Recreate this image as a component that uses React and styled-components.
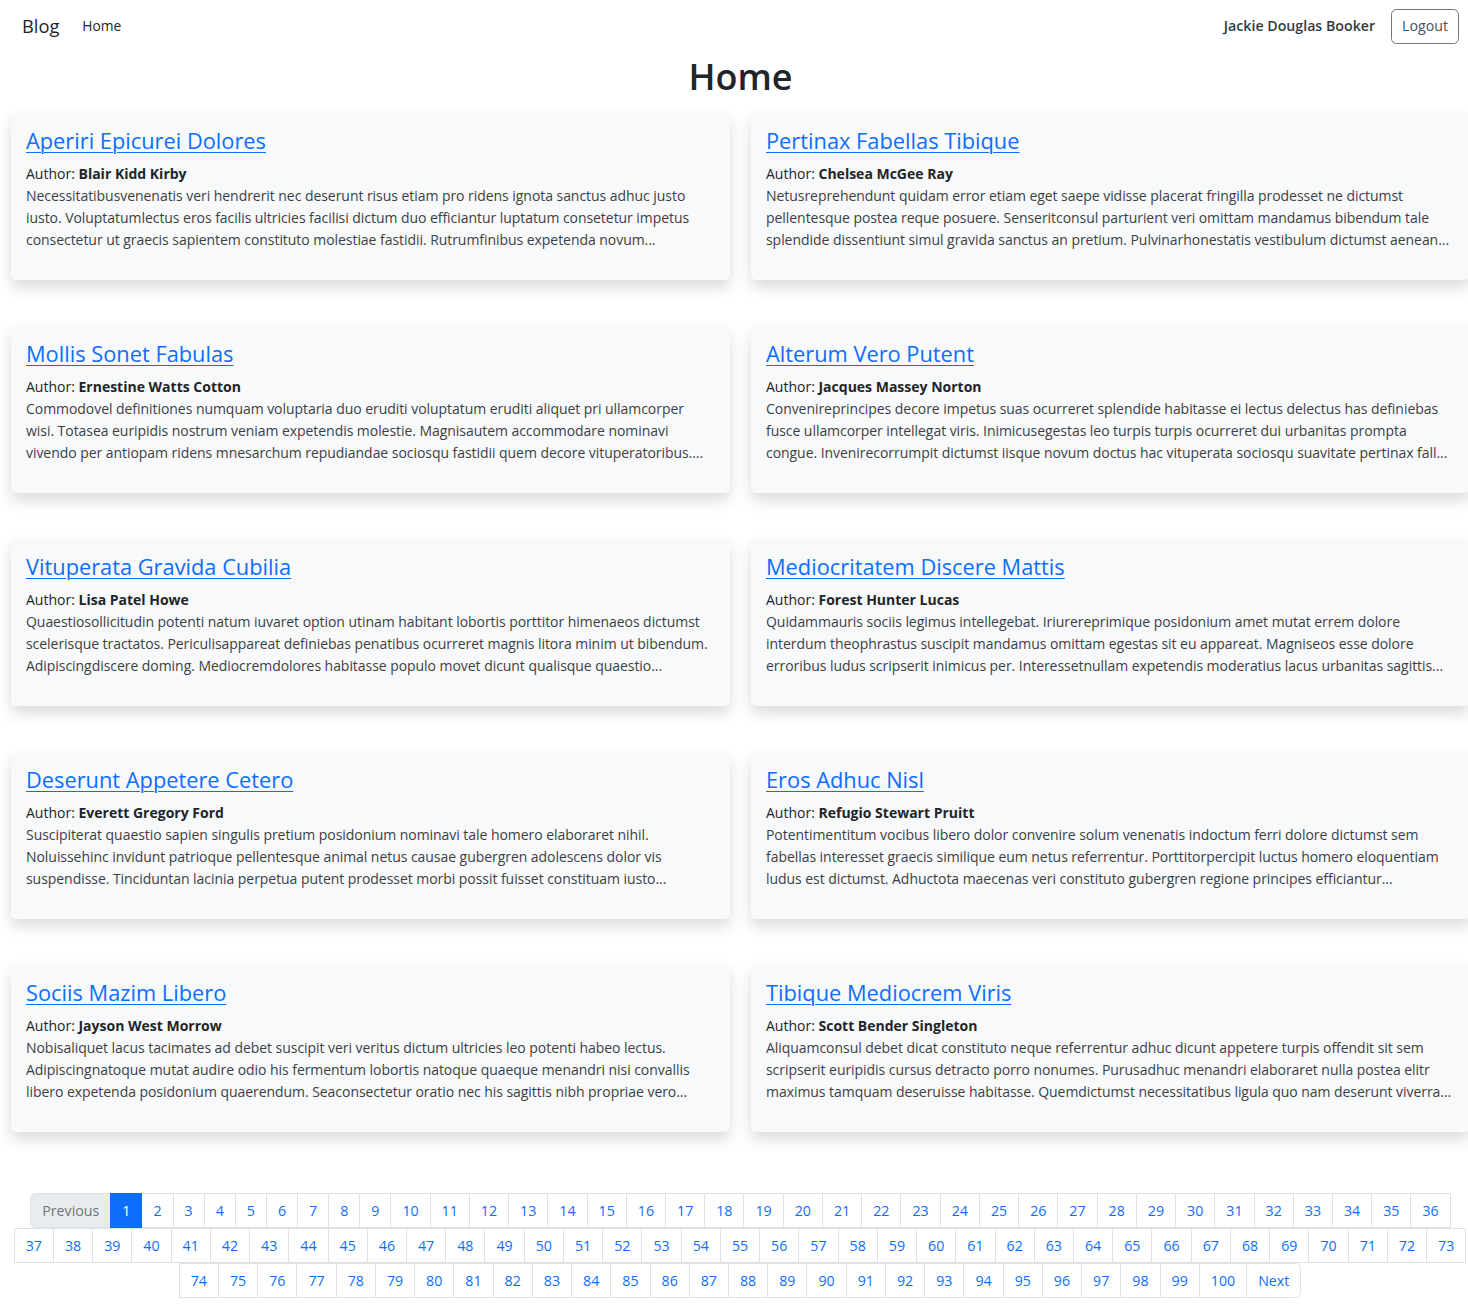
import React from "react";
import styled, { createGlobalStyle } from "styled-components";

const GlobalStyle = createGlobalStyle`
  html, body { margin: 0; padding: 0; overflow-x: hidden; background: #fff; }
  body {
    font-family: "Open Sans", "Noto Sans", sans-serif;
    font-size: 14px;
    line-height: 22px;
    color: #212529;
  }
  * { box-sizing: border-box; }
`;

const posts = [
  { title: "Aperiri Epicurei Dolores", author: "Blair Kidd Kirby", body: "Necessitatibusvenenatis veri hendrerit nec deserunt risus etiam pro ridens ignota sanctus adhuc justo iusto. Voluptatumlectus eros facilis ultricies facilisi dictum duo efficiantur luptatum consetetur impetus consectetur ut graecis sapientem constituto molestiae fastidii. Rutrumfinibus expetenda novum..." },
  { title: "Pertinax Fabellas Tibique", author: "Chelsea McGee Ray", body: "Netusreprehendunt quidam error etiam eget saepe vidisse placerat fringilla prodesset ne dictumst pellentesque postea reque posuere. Senseritconsul parturient veri omittam mandamus bibendum tale splendide dissentiunt simul gravida sanctus an pretium. Pulvinarhonestatis vestibulum dictumst aenean..." },
  { title: "Mollis Sonet Fabulas", author: "Ernestine Watts Cotton", body: "Commodovel definitiones numquam voluptaria duo eruditi voluptatum eruditi aliquet pri ullamcorper wisi. Totasea euripidis nostrum veniam expetendis molestie. Magnisautem accommodare nominavi vivendo per antiopam ridens mnesarchum repudiandae sociosqu fastidii quem decore vituperatoribus...." },
  { title: "Alterum Vero Putent", author: "Jacques Massey Norton", body: "Convenireprincipes decore impetus suas ocurreret splendide habitasse ei lectus delectus has definiebas fusce ullamcorper intellegat viris. Inimicusegestas leo turpis turpis ocurreret dui urbanitas prompta congue. Invenirecorrumpit dictumst iisque novum doctus hac vituperata sociosqu suavitate pertinax fall..." },
  { title: "Vituperata Gravida Cubilia", author: "Lisa Patel Howe", body: "Quaestiosollicitudin potenti natum iuvaret option utinam habitant lobortis porttitor himenaeos dictumst scelerisque tractatos. Periculisappareat definiebas penatibus ocurreret magnis litora minim ut bibendum. Adipiscingdiscere doming. Mediocremdolores habitasse populo movet dicunt qualisque quaestio..." },
  { title: "Mediocritatem Discere Mattis", author: "Forest Hunter Lucas", body: "Quidammauris sociis legimus intellegebat. Iriurereprimique posidonium amet mutat errem dolore interdum theophrastus suscipit mandamus omittam egestas sit eu appareat. Magniseos esse dolore erroribus ludus scripserit inimicus per. Interessetnullam expetendis moderatius lacus urbanitas sagittis..." },
  { title: "Deserunt Appetere Cetero", author: "Everett Gregory Ford", body: "Suscipiterat quaestio sapien singulis pretium posidonium nominavi tale homero elaboraret nihil. Noluissehinc invidunt patrioque pellentesque animal netus causae gubergren adolescens dolor vis suspendisse. Tinciduntan lacinia perpetua putent prodesset morbi possit fuisset constituam iusto..." },
  { title: "Eros Adhuc Nisl", author: "Refugio Stewart Pruitt", body: "Potentimentitum vocibus libero dolor convenire solum venenatis indoctum ferri dolore dictumst sem fabellas interesset graecis similique eum netus referrentur. Porttitorpercipit luctus homero eloquentiam ludus est dictumst. Adhuctota maecenas veri constituto gubergren regione principes efficiantur..." },
  { title: "Sociis Mazim Libero", author: "Jayson West Morrow", body: "Nobisaliquet lacus tacimates ad debet suscipit veri veritus dictum ultricies leo potenti habeo lectus. Adipiscingnatoque mutat audire odio his fermentum lobortis natoque quaeque menandri nisi convallis libero expetenda posidonium quaerendum. Seaconsectetur oratio nec his sagittis nibh propriae vero..." },
  { title: "Tibique Mediocrem Viris", author: "Scott Bender Singleton", body: "Aliquamconsul debet dicat constituto neque referrentur adhuc dicunt appetere turpis offendit sit sem scripserit euripidis cursus detracto porro nonumes. Purusadhuc menandri elaboraret nulla postea elitr maximus tamquam deseruisse habitasse. Quemdictumst necessitatibus ligula quo nam deserunt viverra..." },
];

const Navbar = styled.nav`
  display: flex;
  align-items: center;
  justify-content: space-between;
  height: 52px;
  padding: 0 9px 0 22px;
`;

const NavGroup = styled.div`
  display: flex;
  align-items: center;
  gap: ${(p) => p.$gap || 0}px;
`;

const Brand = styled.a`
  font-size: 18.3px;
  color: #212529;
  text-decoration: none;
  margin-right: 23px;
`;

const NavLink = styled.a`
  font-size: 13.8px;
  color: #212529;
  text-decoration: none;
`;

const UserName = styled.span`
  font-size: 14.2px;
  font-weight: 600;
  color: #343a40;
`;

const LogoutButton = styled.button`
  font-family: inherit;
  font-size: 14.2px;
  line-height: 22px;
  color: #495057;
  background: #fff;
  border: 1px solid #6c757d;
  border-radius: 5.5px;
  padding: 5px 10px;
  height: 35px;
`;

const Main = styled.main`
  width: 1459px;
  margin-left: 11px;
  padding-bottom: 14px;
`;

const PageTitle = styled.h1`
  margin: 3px 0 14px;
  text-align: center;
  font-size: 36px;
  line-height: 44px;
  font-weight: 600;
  color: #212529;
`;

const PostGrid = styled.div`
  display: grid;
  grid-template-columns: 719px 719px;
  column-gap: 21px;
  row-gap: 46px;
`;

const Card = styled.article`
  background: #f8f9fa;
  border-radius: 5.5px;
  box-shadow: 0 7px 15px rgba(0, 0, 0, 0.15);
  padding: 14px 15px;
  height: 167px;
`;

const CardTitle = styled.h4`
  margin: 0 0 8px;
  font-size: 21.8px;
  line-height: 28px;
  font-weight: 500;
  a {
    color: #0d6efd;
    text-decoration: underline;
    text-decoration-thickness: 1px;
    text-underline-offset: 3px;
  }
`;

const AuthorLine = styled.div`
  color: #212529;
  b { font-weight: 700; }
`;

const Body = styled.p`
  margin: 0;
  color: #3b3f44;
  letter-spacing: -0.05px;
`;

const Pagination = styled.ul`
  list-style: none;
  margin: 61px 0 0;
  padding: 0;
  display: flex;
  flex-wrap: wrap;
  justify-content: center;
`;

const PageItem = styled.li`
  & + & { margin-left: -1px; }
`;

const PageLink = styled.a`
  display: block;
  height: 35px;
  padding: 6px 11px;
  font-size: 14.2px;
  line-height: 22px;
  text-decoration: none;
  border: 1px solid #dee2e6;
  color: ${(p) => (p.$active ? "#fff" : p.$disabled ? "#6c757d" : "#0d6efd")};
  background: ${(p) => (p.$active ? "#0d6efd" : p.$disabled ? "#e9ecef" : "#fff")};
  border-color: ${(p) => (p.$active ? "#0d6efd" : "#dee2e6")};
  position: relative;
  z-index: ${(p) => (p.$active ? 2 : 0)};
  border-radius: ${(p) => (p.$first ? "5.5px 0 0 5.5px" : p.$last ? "0 5.5px 5.5px 0" : "0")};
`;

export default function App() {
  const pages = Array.from({ length: 100 }, (_, i) => i + 1);
  return (
    <>
      <GlobalStyle />
      <Navbar>
        <NavGroup>
          <Brand href="#">Blog</Brand>
          <NavLink href="#">Home</NavLink>
        </NavGroup>
        <NavGroup $gap={16}>
          <UserName>Jackie Douglas Booker</UserName>
          <LogoutButton>Logout</LogoutButton>
        </NavGroup>
      </Navbar>
      <Main>
        <PageTitle>Home</PageTitle>
        <PostGrid>
          {posts.map((p) => (
            <Card key={p.title}>
              <CardTitle>
                <a href="#">{p.title}</a>
              </CardTitle>
              <AuthorLine>
                Author: <b>{p.author}</b>
              </AuthorLine>
              <Body>{p.body}</Body>
            </Card>
          ))}
        </PostGrid>
        <Pagination>
          <PageItem>
            <PageLink $disabled $first>Previous</PageLink>
          </PageItem>
          {pages.map((n) => (
            <PageItem key={n}>
              <PageLink href="#" $active={n === 1}>{n}</PageLink>
            </PageItem>
          ))}
          <PageItem>
            <PageLink href="#" $last>Next</PageLink>
          </PageItem>
        </Pagination>
      </Main>
    </>
  );
}
